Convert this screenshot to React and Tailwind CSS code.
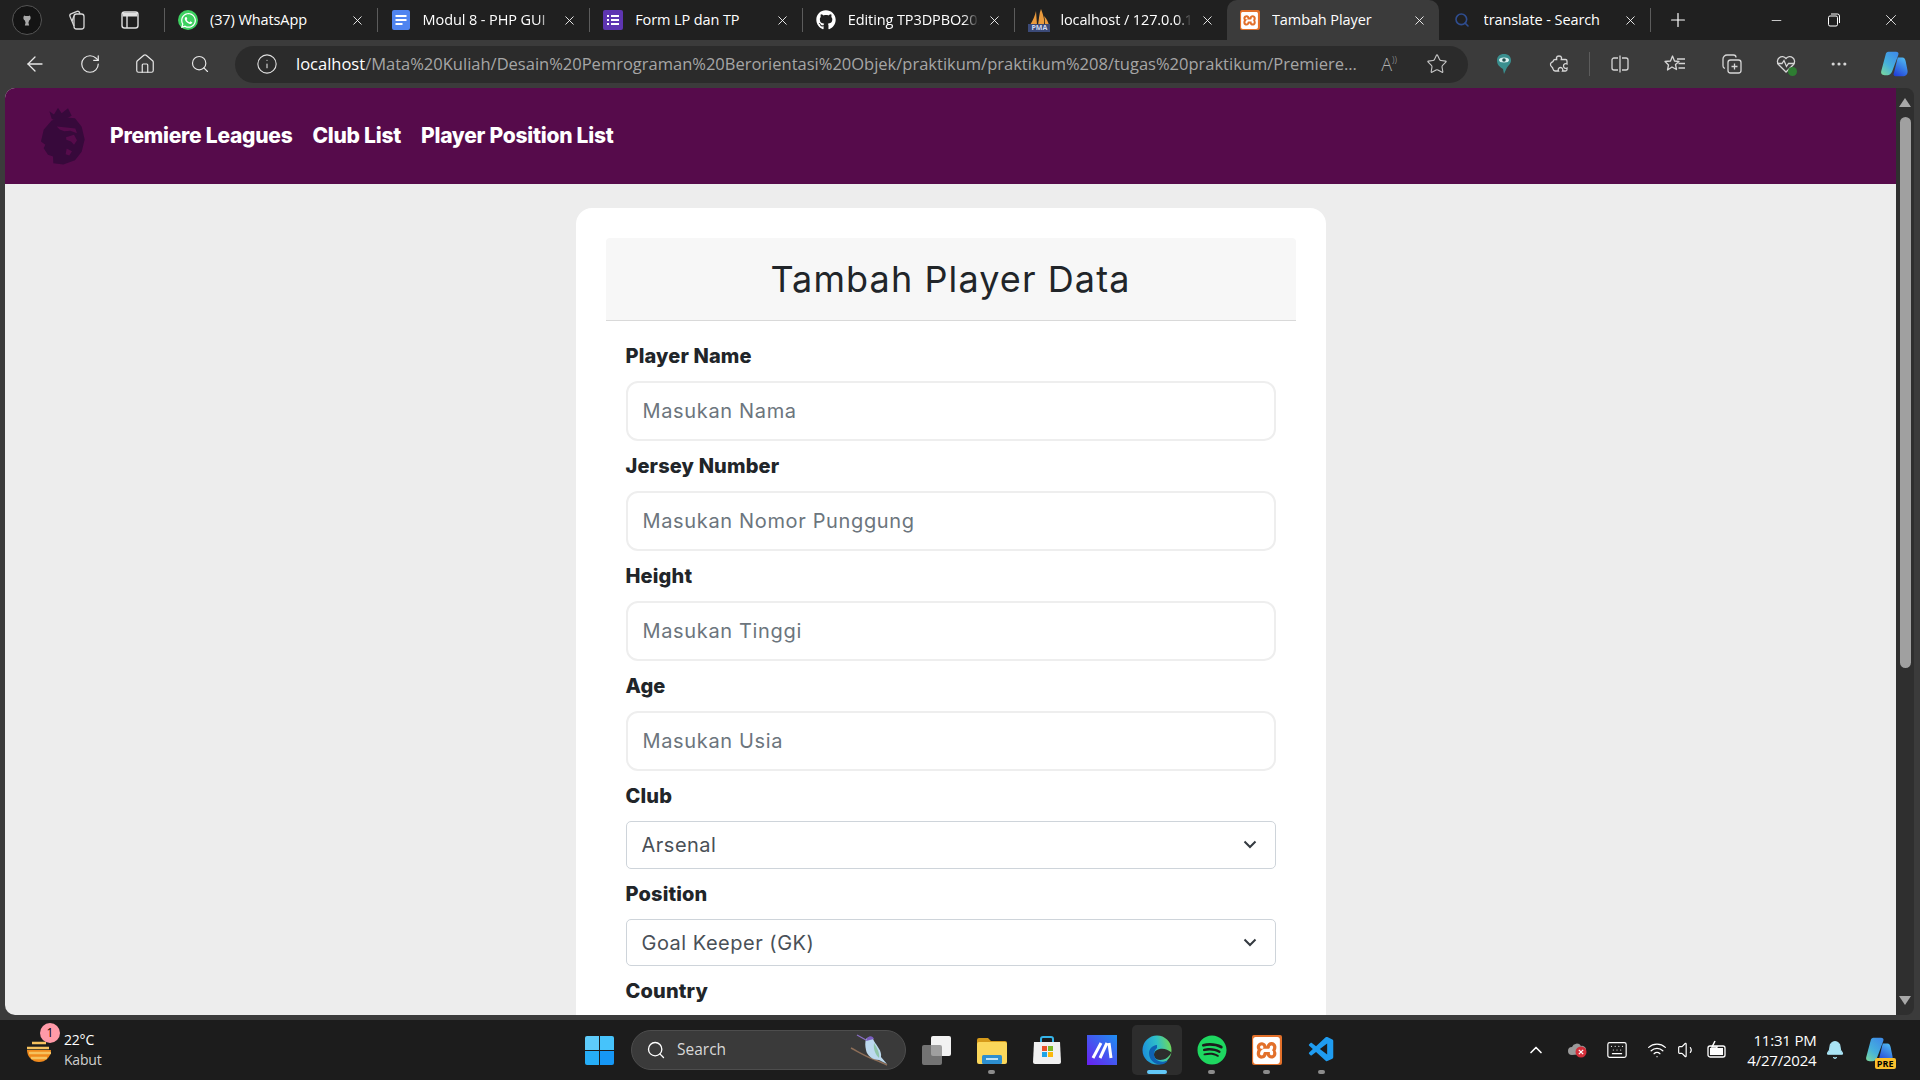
import React from "react";
import { FaWhatsapp, FaGithub, FaSpotify } from "react-icons/fa";
import { SiXampp } from "react-icons/si";
import { VscVscode } from "react-icons/vsc";
import { ArrowLeft, RotateCw, Home, Search, Info, Star, Ellipsis, Plus, Minus, X, ChevronUp, Bell, Wifi, Volume1, Keyboard } from "lucide-react";

const Sep = () => <div className="h-6 w-px shrink-0 bg-[#5c5c5c]" />;

const Xampp = ({ s = 20 }) => (
  <div className="flex items-center justify-center rounded-[2px] bg-[#e2702a]" style={{ width: s, height: s }}>
    <SiXampp className="text-white" size={s - 3} />
  </div>
);

const DocsIcon = () => (
  <svg width="20" height="20" viewBox="0 0 20 20"><rect x="1" width="18" height="20" rx="2" fill="#4f84f0" /><path d="M4.5 6h11M4.5 10h11M4.5 14h7" stroke="#fff" strokeWidth="2" /></svg>
);
const FormsIcon = () => (
  <svg width="20" height="20" viewBox="0 0 20 20"><rect width="20" height="20" rx="2" fill="#5e35b1" /><path d="M8 6h8M8 10h8M8 14h8M4 6h2M4 10h2M4 14h2" stroke="#fff" strokeWidth="1.8" /></svg>
);
const PmaIcon = () => (
  <div className="relative h-[24px] w-[22px]">
    <svg width="22" height="18" viewBox="0 0 22 18" className="absolute left-0 top-0"><path d="M2 17C5 12 7 8 8 3l1 14zM10 17c1-6 1-11 3-16 2 5 4 11 3 16zM17 17c0-3 0-6-1-9 3 3 4 6 5 9z" fill="#ea9a3c" /></svg>
    <div className="absolute bottom-0 left-0 h-[8px] w-[22px] overflow-hidden bg-[#3b4a78] text-center text-[7px] font-bold leading-[8px] text-[#cfd8f0]">PMA</div>
  </div>
);

function Tab({ icon, title, active, fade }) {
  return (
    <div className={`flex h-10 w-[211.6px] shrink-0 items-center pl-[13px] pr-[12px] ${active ? "rounded-t-[10px] bg-[#3b3b3b]" : ""}`}>
      <div className="flex w-5 shrink-0 items-center justify-center">{icon}</div>
      <div className={`ml-[12px] min-w-0 flex-1 overflow-hidden whitespace-nowrap text-[14.5px] tracking-[-0.1px] text-white ${fade ? "[mask-image:linear-gradient(to_right,black_88%,transparent)]" : ""}`}>{title}</div>
      <X className="ml-2 shrink-0 text-white" size={15} strokeWidth={1.4} />
    </div>
  );
}

function Field({ label, placeholder }) {
  return (
    <div className="mb-[10px]">
      <label className="mb-[10px] block text-[20px] font-extrabold leading-[30px] tracking-[0.15px] text-[#212529]">{label}</label>
      <input
        placeholder={placeholder}
        className="block h-[60px] w-full rounded-[12px] border-2 border-[#eeeeee] bg-white px-[15px] text-[20px] tracking-[0.65px] outline-none placeholder:text-[#6c757d]"
      />
    </div>
  );
}

function Pick({ label, value, h47 }) {
  return (
    <div className="mb-[10px]">
      <label className="mb-[10px] block text-[20px] font-extrabold leading-[30px] tracking-[0.15px] text-[#212529]">{label}</label>
      <div className="relative">
        <select className={`block w-full appearance-none rounded-[5px] border border-[#ced4da] bg-white px-[15px] text-[20px] tracking-[0.5px] text-[#495057] outline-none ${h47 ? "h-[47px]" : "h-[48px]"}`}>
          <option>{value}</option>
        </select>
        <svg className="pointer-events-none absolute right-[18px] top-[17px]" width="16" height="12" viewBox="0 0 16 12"><path d="M2.5 3.5 8 9l5.5-5.5" fill="none" stroke="#343a40" strokeWidth="2" /></svg>
      </div>
    </div>
  );
}

const Lion = () => (
  <svg width="45" height="57" viewBox="120 85 135 170" className="shrink-0">
    <path fill="#37093b" d="M148 94l14 10 12-20 11 16 19-15 11 23-10 5-45 7-5-3zM155 122l35-10 35 3 20 26 9 38-9 37-20 25-35 13-30-4-1-20-15-5-13-20 5-10-13-10 8-35z" />
    <path fill="#560b4b" d="M170 140l30 3 26 3 5 14-20-7-18 1-14-5zM198 172l24-7 9 16-9 14-9-10-14-5zM200 206l16 8-8 13-11-4z" />
  </svg>
);

const TopIcon = ({ children, cls }) => <div className={`flex h-6 w-6 shrink-0 items-center justify-center text-[#d6d6d6] ${cls}`}>{children}</div>;

const Win = () => (
  <div className="grid h-[29px] w-[29px] grid-cols-2 gap-[1px]">
    <div className="rounded-tl-[2px] bg-[#5ecbfa]" /><div className="rounded-tr-[2px] bg-[#46c3fb]" />
    <div className="rounded-bl-[2px] bg-[#26aef7]" /><div className="rounded-br-[2px] bg-[#1697f5]" />
  </div>
);

const Edge = ({ s = 30 }) => (
  <svg width={s} height={s} viewBox="0 0 30 30">
    <defs>
      <linearGradient id="eg" x1="0" y1="0.6" x2="1" y2="0.4"><stop offset="0" stopColor="#1b8fdc" /><stop offset="0.55" stopColor="#2fc0c8" /><stop offset="1" stopColor="#6fd85a" /></linearGradient>
    </defs>
    <circle cx="15" cy="15" r="14.5" fill="url(#eg)" />
    <path d="M29.5 17.5c-3.5-3-8-4.5-12-3.5-4.5 1-6.5 4.5-5 8 1.2 2.7 5 3.5 9 2.5 3-.8 5.5-3 8-7z" fill="#2d2d2d" />
    <path d="M15 10c-5 .5-8 4-8 8.5 0 5.5 5 11 11 11 3.5 0 6-1.5 8-4-4 2-10 1.5-12.5-2-2.5-3.5-1.5-8 1.5-10.5z" fill="#0f62b4" />
    <path d="M20 16c-3 0-5 2-4.5 4.5.5 2.2 3 3 5.5 2.2l6-4c-2-1.6-4.5-2.7-7-2.7z" fill="#2d2d2d" />
  </svg>
);

const Explorer = () => (
  <svg width="30" height="30" viewBox="0 0 30 30">
    <path d="M0 5a2 2 0 0 1 2-2h9l3 3h14a2 2 0 0 1 2 2v4H0z" fill="#d69a1a" />
    <rect y="7" width="30" height="22" rx="2" fill="#fbd75b" />
    <rect x="5" y="20" width="20" height="9" rx="1.5" fill="#2d8fd0" />
    <rect x="9" y="23" width="12" height="2" fill="#bfe3f7" />
  </svg>
);

const Store = () => (
  <svg width="30" height="30" viewBox="0 0 30 30">
    <path d="M9 7V4a2 2 0 0 1 2-2h8a2 2 0 0 1 2 2v3" stroke="#35b4e8" strokeWidth="2" fill="none" />
    <path d="M2 7h26l1 20a2 2 0 0 1-2 2H3a2 2 0 0 1-2-2z" fill="#f0f0f0" />
    <rect x="10" y="11" width="5" height="5" fill="#e8532b" /><rect x="16" y="11" width="5" height="5" fill="#7dba2a" />
    <rect x="10" y="17" width="5" height="5" fill="#1da4e8" /><rect x="16" y="17" width="5" height="5" fill="#fbb80b" />
  </svg>
);

const Next = () => (
  <svg width="30" height="30" viewBox="0 0 30 30">
    <defs><linearGradient id="ng" x1="0" y1="1" x2="1" y2="0"><stop offset="0" stopColor="#6a1ff0" /><stop offset="1" stopColor="#1d8ff0" /></linearGradient></defs>
    <rect width="30" height="30" fill="url(#ng)" />
    <path d="M6 23 14 8M13 23 20 8M22 8l2 15" stroke="#fff" strokeWidth="3" fill="none" />
  </svg>
);

const Copilot = ({ s = 30, pre }) => (
  <div className="relative" style={{ width: s, height: s }}>
    <svg width={s} height={s} viewBox="0 0 30 30">
      <defs><linearGradient id={pre ? "c1" : "c2"} x1="0" y1="1" x2="0.7" y2="0"><stop offset="0" stopColor="#7ddb9a" /><stop offset="0.5" stopColor="#45b0dc" /><stop offset="1" stopColor="#3f8fe8" /></linearGradient>
        <linearGradient id={pre ? "c3" : "c4"} x1="0.7" y1="0" x2="0.2" y2="1"><stop offset="0" stopColor="#4fb8f0" /><stop offset="1" stopColor="#2140d8" /></linearGradient></defs>
      <path d="M9 2h8c2.5 0 3.5 1.5 2.5 3.5L13 23c-1 2.5-3 4-5 4H5c-3 0-4.5-2-3.500-5L6 5c.5-2 1.5-3 3-3z" fill={`url(#${pre ? "c1" : "c2"})`} />
      <path d="M19 8h5c2 0 3 1.5 3.500 4l2 10c.5 3-1 6-4 6h-9c-2 0-2.500-1.500-1.500-3.500z" fill={`url(#${pre ? "c3" : "c4"})`} />
    </svg>
    {pre && <div className="absolute bottom-[-5px] right-[-3px] rounded-[2px] bg-[#fbc02d] px-[2px] text-[9px] font-bold leading-[11px] text-black">PRE</div>}
  </div>
);

const Bird = () => (
  <svg width="42" height="36" viewBox="0 0 42 34">
    <path d="M2 15c6 3 14 8 22 11 5 2 10 4 14 6" stroke="#8d6e58" strokeWidth="1.4" fill="none" />
    <path d="M17 6c3-3 7-2 8 2 3 5 8 10 7 16l6 7-8-4c-6 0-12-4-13-10-1-4-1-8 0-11z" fill="#bcd9ee" />
    <path d="M25 10c3 5 6 10 5 15-3-3-6-8-5-15z" fill="#8fc5a8" />
    <path d="M17 7 8 2" stroke="#8b6fc7" strokeWidth="1.2" />
    <path d="M18 5c3-3 6-2 7 1l-8 2z" fill="#7a5fc0" />
  </svg>
);

const Dot = ({ on }) => <div className={`mt-[5px] h-[4px] rounded-full ${on ? "w-5 bg-[#62c8f8]" : "w-[7px] bg-[#8c8c8c]"}`} />;

const Pin = ({ children, dot, on }) => (
  <div className={`flex h-[50px] w-[50px] shrink-0 flex-col items-center justify-end pb-[1px] ${on ? "rounded-[5px] bg-[#2d2d2d]" : ""}`}>
    {children}
    {dot ? <Dot on={on} /> : <div className="mt-[5px] h-[4px]" />}
  </div>
);

export default function App() {
  return (
    <div className="flex h-screen w-full flex-col overflow-hidden bg-[#3b3b3b] font-['Open_Sans',sans-serif]">
      {/* Tab strip */}
      <div className="flex h-10 shrink-0 items-center bg-[#202020]">
        <div className="ml-[12px] flex h-[30px] w-[30px] shrink-0 items-center justify-center rounded-full border border-[#555] bg-[#141414]">
          <svg width="10" height="13" viewBox="0 0 14 16"><path d="M3 1c2 1 6 1 8 0 2 3 1 6-1 7l-1 3 1 4H4l1-4-1-3C2 7 1 4 3 1z" fill="#a8a8a8" /></svg>
        </div>
        <TopIcon cls="ml-[23px]">
          <svg width="22" height="22" viewBox="0 0 22 22" fill="none" stroke="#d6d6d6" strokeWidth="1.3"><rect x="8" y="5" width="10" height="15" rx="2.5" /><path d="M8 17 4 7.5a2 2 0 0 1 1-2.6l6-2.5a2 2 0 0 1 2.5 1L14 5" /><path d="M6 12 8 7" /></svg>
        </TopIcon>
        <TopIcon cls="ml-[29px]">
          <svg width="20" height="20" viewBox="0 0 20 20" fill="none" stroke="#e0e0e0" strokeWidth="1.4"><rect x="2" y="2" width="16" height="16" rx="2.5" /><rect x="2.7" y="2.7" width="14.6" height="3.8" fill="#e0e0e0" stroke="none" /><path d="M7 6v12" /></svg>
        </TopIcon>
        <div className="ml-[22px] h-6 w-px bg-[#5c5c5c]" />
        <Tab icon={<div className="flex h-5 w-5 items-center justify-center rounded-full bg-[#3dd160]"><FaWhatsapp className="text-white" size={17} /></div>} title="(37) WhatsApp" />
        <Sep />
        <Tab icon={<DocsIcon />} title="Modul 8 - PHP GUI" fade />
        <Sep />
        <Tab icon={<FormsIcon />} title="Form LP dan TP" />
        <Sep />
        <Tab icon={<FaGithub className="text-white" size={20} />} title="Editing TP3DPBO2024" fade />
        <Sep />
        <Tab icon={<PmaIcon />} title="localhost / 127.0.0.1" fade />
        <Tab active icon={<Xampp />} title="Tambah Player" />
        <Tab icon={<Search className="text-[#2f4d8f]" size={16} strokeWidth={2.4} />} title="translate - Search" />
        <div className="h-6 w-px bg-[#5c5c5c]" />
        <Plus className="ml-[16px] text-white" size={22} strokeWidth={1.3} />
        <div className="ml-auto flex items-center">
          <div className="flex w-[57.5px] justify-center"><Minus className="text-white" size={15} strokeWidth={1.2} /></div>
          <div className="flex w-[57.5px] justify-center">
            <svg width="14" height="14" viewBox="0 0 14 14" fill="none" stroke="#fff" strokeWidth="1"><rect x="1.5" y="3" width="9" height="10" rx="1.5" /><path d="M4 1h6.5A2 2 0 0 1 12.5 3v7" /></svg>
          </div>
          <div className="flex w-[57.5px] justify-center"><X className="text-white" size={18} strokeWidth={1.1} /></div>
        </div>
      </div>

      {/* Toolbar */}
      <div className="flex h-12 shrink-0 items-center bg-[#3b3b3b] pl-[7.5px]">
        <div className="flex w-[55px] justify-center"><ArrowLeft className="text-[#e8e8e8]" size={24} strokeWidth={1.3} /></div>
        <div className="flex w-[55px] justify-center"><RotateCw className="text-[#e8e8e8]" size={22} strokeWidth={1.3} /></div>
        <div className="flex w-[55px] justify-center"><Home className="text-[#e8e8e8]" size={22} strokeWidth={1.3} /></div>
        <div className="flex w-[55px] justify-center"><Search className="text-[#e8e8e8]" size={20} strokeWidth={1.4} /></div>
        <div className="ml-[7.5px] flex h-[37px] w-[1233px] shrink-0 items-center rounded-full bg-[#2b2b2b] pl-[21px] pr-[20px]">
          <Info className="shrink-0 text-[#e0e0e0]" size={22} strokeWidth={1.2} />
          <div className="ml-[18px] w-[1064px] shrink-0 overflow-hidden whitespace-nowrap text-[16.5px] text-[#a6a6a6]">
            <span className="text-white">localhost</span>/Mata%20Kuliah/Desain%20Pemrograman%20Berorientasi%20Objek/praktikum/praktikum%208/tugas%20praktikum/Premiere...
          </div>
          <div className="ml-[17px] flex h-6 w-6 shrink-0 items-center justify-center text-[18px] font-light text-[#b0b0b0]">A<span className="mb-2 text-[9px]">))</span></div>
          <Star className="ml-[25px] shrink-0 text-[#c8c8c8]" size={22} strokeWidth={1.2} />
        </div>
        <TopIcon cls="ml-[24px]">
          <svg width="16" height="22" viewBox="0 0 16 22"><path d="M8 1c4.5 0 7 2.5 7 6.5 0 3.5-3 5-4.5 8L8 21l-1-5C4 14 1 12 1 7.5 1 3.5 3.5 1 8 1z" fill="#3a8f8f" /><ellipse cx="8" cy="7" rx="5" ry="2.5" fill="#d8f0f0" /><circle cx="8" cy="7" r="1.8" fill="#1f4f4f" /></svg>
        </TopIcon>
        <TopIcon cls="ml-[31px]">
          <svg width="20" height="20" viewBox="0 0 20 20" fill="none" stroke="#d6d6d6" strokeWidth="1.3"><path d="M7.5 3.5c.5-2 4.5-2 5 0 .2.9-.3 1.5-.3 2h4.300c1 0 1.500.5 1.500 1.500v3c-1.500-.8-3.500 0-3.500 2s2 2.800 3.500 2v1.500c0 1-.5 1.500-1.500 1.500h-3c.8-1.500 0-3.500-2-3.500s-2.800 2-2 3.500H6c-2 0-2-2-2.500-3.500C3 13 1 12 1.500 10 2 8 3 8.500 4 7.500c.3-1.500.5-2 2-2h1.700c0-.5 0-1.100-.2-2z" /></svg>
        </TopIcon>
        <div className="ml-[18px] h-6 w-px bg-[#5c5c5c]" />
        <TopIcon cls="ml-[18px]">
          <svg width="20" height="20" viewBox="0 0 20 20" fill="none" stroke="#d6d6d6" strokeWidth="1.3"><path d="M8 4H4a2 2 0 0 0-2 2v8a2 2 0 0 0 2 2h4M12 4h4a2 2 0 0 1 2 2v8a2 2 0 0 1-2 2h-4M10 1.5v17" /></svg>
        </TopIcon>
        <TopIcon cls="ml-[31px]">
          <svg width="22" height="20" viewBox="0 0 22 20" fill="none" stroke="#d6d6d6" strokeWidth="1.3"><path d="M8.5 2 10.500 7 15 7.500 11.500 10.500 12.500 15.500 8 13 3.500 16 4.500 11 1 7.500 6.500 7z" strokeLinejoin="round" /><path d="M13 5h8M14.500 9.500H21M14.500 14H21" /></svg>
        </TopIcon>
        <TopIcon cls="ml-[33px]">
          <svg width="22" height="22" viewBox="0 0 22 22" fill="none" stroke="#d6d6d6" strokeWidth="1.3"><rect x="7" y="7" width="13" height="13" rx="2.5" /><path d="M13.5 10.500v6M10.500 13.500h6M15 4.500A2.500 2.500 0 0 0 12.500 2H6a4 4 0 0 0-4 4v7a2.500 2.500 0 0 0 2 2.400" /></svg>
        </TopIcon>
        <TopIcon cls="relative ml-[30px]">
          <svg width="22" height="22" viewBox="0 0 22 22" fill="none" stroke="#d6d6d6" strokeWidth="1.3"><path d="M11 19 3.500 11.500A4.800 4.800 0 0 1 11 5.500a4.800 4.800 0 0 1 7.500 6L11 19z" /><path d="M2 10.500h5l2-3 2.500 6 2-3h6" /></svg>
          <div className="absolute bottom-0 right-[1px] h-[9px] w-[9px] rounded-full bg-[#2e7d32]" />
        </TopIcon>
        <TopIcon cls="ml-[29px]"><Ellipsis size={20} strokeWidth={1.8} /></TopIcon>
        <div className="ml-[29px]"><Copilot s={28} /></div>
      </div>

      {/* Viewport row */}
      <div className="flex min-h-0 h-[927px] shrink-0 pl-[5px] pr-[6px]">
        <div className="min-w-0 flex-1 overflow-hidden rounded-tl-[10px] rounded-bl-[10px] bg-[#ededed] font-['Inter',sans-serif]">
          <nav className="flex h-24 items-center bg-[#560b4b] pl-[35px]">
            <Lion />
            <div className="ml-[25px] text-[21px] font-extrabold tracking-[-0.25px] text-white">Premiere Leagues</div>
            <div className="ml-[20px] text-[21px] font-extrabold tracking-[-0.25px] text-white">Club List</div>
            <div className="ml-[20px] text-[21px] font-extrabold tracking-[-0.25px] text-white">Player Position List</div>
          </nav>
          <div className="mx-auto mt-6 w-[750px] rounded-t-[16px] bg-white px-[30px] pt-[30px]">
            <div className="flex h-[83px] items-center justify-center rounded-t-[4px] border-b border-[#d9d9d9] bg-[#f7f7f7] text-[36px] font-normal tracking-[1.1px] text-[#212529]">
              Tambah Player Data
            </div>
            <div className="px-5 pt-5">
              <Field label="Player Name" placeholder="Masukan Nama" />
              <Field label="Jersey Number" placeholder="Masukan Nomor Punggung" />
              <Field label="Height" placeholder="Masukan Tinggi" />
              <Field label="Age" placeholder="Masukan Usia" />
              <Pick label="Club" value="Arsenal" />
              <Pick label="Position" value="Goal Keeper (GK)" h47 />
              <Pick label="Country" value="England" />
            </div>
          </div>
        </div>
        <div className="flex w-[18px] shrink-0 flex-col items-center rounded-r-[8px] bg-[#2f2f2f] pt-[10px]">
          <div className="h-0 w-0 border-x-[6px] border-b-[9px] border-x-transparent border-b-[#a8a8a8]" />
          <div className="mt-[10px] h-[551px] w-[11px] rounded-full bg-[#a0a0a0]" />
          <div className="mt-auto mb-[10px] h-0 w-0 border-x-[6px] border-t-[9px] border-x-transparent border-t-[#a8a8a8]" />
        </div>
      </div>

      <div className="h-[5px] shrink-0 bg-[#3b3b3b]" />

      {/* Taskbar */}
      <div className="relative flex h-[60px] shrink-0 items-center bg-[#1c1c1c] font-['Open_Sans',sans-serif] text-white">
        <div className="relative ml-[26px] h-[30px] w-[26px] shrink-0">
          <svg width="26" height="30" viewBox="0 0 26 30"><path d="M1 15h24a12 12 0 0 1-24 0z" fill="#f08a1d" /><path d="M6 8h14M1 13h22M3 18h22M5 23h16" stroke="#f6c25e" strokeWidth="2.4" /></svg>
          <div className="absolute right-[-8px] top-[-12px] flex h-5 w-5 items-center justify-center rounded-full bg-[#ff9aa8] text-[12px] text-black">1</div>
        </div>
        <div className="ml-[12px] w-[36px] shrink-0 text-[14px] leading-[20px] tracking-[-0.2px]">
          <div>22°C</div>
          <div className="text-[#cfcfcf]">Kabut</div>
        </div>
        <div className="ml-[485px] shrink-0"><Win /></div>
        <div className="ml-[17px] flex h-10 w-[275px] shrink-0 items-center rounded-full border border-[#4d4d4d] bg-[#3a3a3a] pl-[14px]">
          <Search className="text-white" size={20} strokeWidth={1.6} />
          <span className="ml-[11px] text-[15.5px] text-[#d8d8d8]">Search</span>
          <div className="ml-auto mr-[14px]"><Bird /></div>
        </div>
        <div className="relative ml-[16px] h-[29px] w-[29px] shrink-0">
          <div className="absolute right-0 top-0 h-[20px] w-[20px] rounded-[2px] bg-[#f2f2f2]" />
          <div className="absolute bottom-0 left-0 h-[20px] w-[20px] rounded-[2px] bg-[#8a8a8a] opacity-80" />
        </div>
        <div className="ml-[15.5px] flex shrink-0 items-center gap-[5px]">
          <Pin dot><Explorer /></Pin>
          <Pin><Store /></Pin>
          <Pin><Next /></Pin>
          <Pin dot on><Edge /></Pin>
          <Pin dot><div className="flex h-[30px] w-[30px] items-center justify-center rounded-full bg-[#1c1c1c]"><FaSpotify className="text-[#1ed760]" size={30} /></div></Pin>
          <Pin dot><Xampp s={30} /></Pin>
          <Pin dot><VscVscode className="text-[#1f9cf0]" size={30} /></Pin>
        </div>
        <ChevronUp className="ml-[179px] shrink-0" size={20} strokeWidth={2} />
        <div className="relative ml-[21px] h-5 w-5 shrink-0">
          <svg width="20" height="18" viewBox="0 0 20 18"><path d="M5 15a4 4 0 0 1 0-8 5 5 0 0 1 9-1 4 4 0 0 1 2 8z" fill="#9a9a9a" /><circle cx="14" cy="12" r="5.5" fill="#d32f3a" /><path d="M11.8 9.8l4.4 4.4M16.2 9.8l-4.4 4.4" stroke="#fff" strokeWidth="1.2" /></svg>
        </div>
        <Keyboard className="ml-[19px] shrink-0" size={22} strokeWidth={1.3} />
        <Wifi className="ml-[19px] shrink-0" size={20} strokeWidth={1.5} />
        <Volume1 className="ml-[10px] shrink-0" size={20} strokeWidth={1.4} />
        <svg className="ml-[9px] shrink-0" width="22" height="20" viewBox="0 0 22 20" fill="none" stroke="#fff" strokeWidth="1.3"><rect x="2" y="6" width="17" height="11" rx="2" /><rect x="4" y="8" width="13" height="7" fill="#fff" stroke="none" /><path d="M9 1 6 7h5l-3 6" strokeWidth="1.5" /></svg>
        <div className="ml-[9px] w-[80px] shrink-0 text-right text-[15px] leading-[20px] tracking-[-0.2px]">
          <div>11:31 PM</div>
          <div>4/27/2024</div>
        </div>
        <Bell className="ml-[8px] shrink-0 fill-[#a9e4f5] text-[#a9e4f5]" size={20} strokeWidth={1.4} />
        <div className="ml-[20px]"><Copilot s={28} pre /></div>
      </div>
    </div>
  );
}
